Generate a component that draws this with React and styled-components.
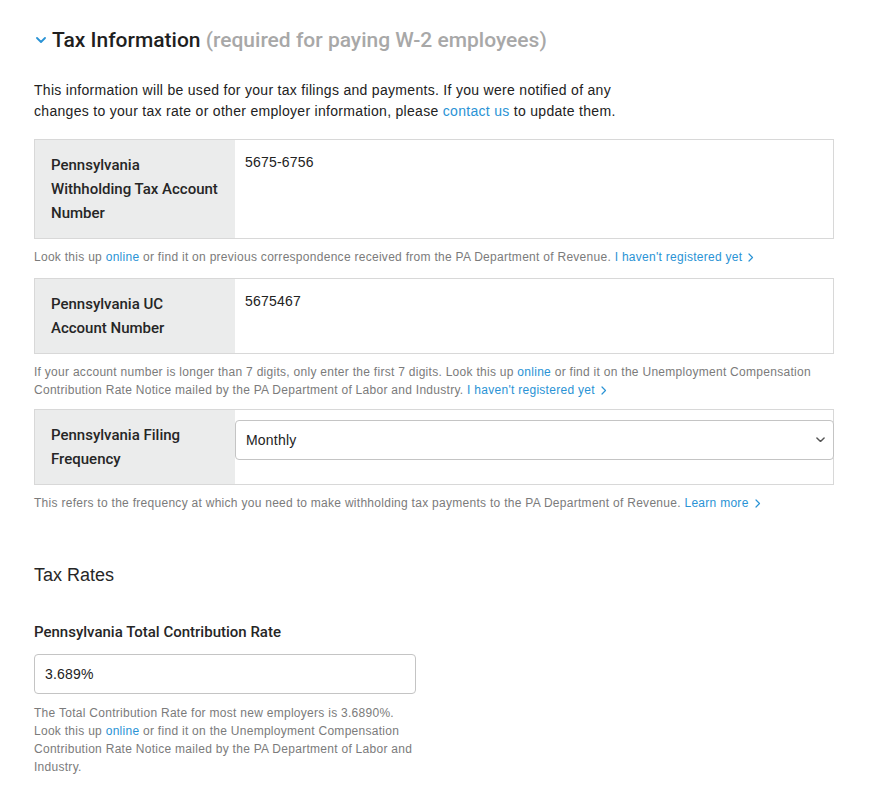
import React, { useState } from 'react'
import styled, { createGlobalStyle } from 'styled-components'

const GlobalStyle = createGlobalStyle`
  body {
    margin: 0;
    background: #fff;
    font-family: "Liberation Sans", Arial, sans-serif;
    color: #1f1f1f;
  }
`

const Page = styled.div`
  width: 800px;
  padding: 26px 0 30px 34px;
`

const Header = styled.div`
  display: flex;
  align-items: center;
  gap: 6px;
  margin-left: 2px;
`

const Title = styled.h2`
  margin: 0;
  font-family: Roboto, "Liberation Sans", sans-serif;
  font-size: 21px;
  line-height: 28px;
  font-weight: 500;
  color: #1f1f1f;
`

const Muted = styled.span`
  color: #a8a8a8;
`

const Intro = styled.p`
  margin: 26px 0 0;
  font-size: 14px;
  line-height: 21px;
  letter-spacing: 0.3px;
  width: 600px;
  color: #222;
`

const Link = styled.a`
  color: #2a93d5;
  text-decoration: none;
  cursor: pointer;
`

const FieldRow = styled.div`
  display: grid;
  grid-template-columns: 200px 1fr;
  border: 1px solid #d8d8d8;
  margin-top: ${(p) => p.$top || 12}px;
`

const Label = styled.div`
  background: #ebecec;
  padding: 13px 16px;
  font-family: Roboto, "Liberation Sans", sans-serif;
  font-size: 15px;
  line-height: 24px;
  font-weight: 500;
  color: #262626;
`

const ValueCell = styled.div`
  padding: 12px 10px;
  font-size: 14px;
  line-height: 20px;
  letter-spacing: 0.2px;
  color: #222;
`

const SelectCell = styled.div`
  padding-top: 10px;
`

const SelectBox = styled.div`
  position: relative;
  height: 40px;
  margin-right: -1px;
`

const Select = styled.select`
  appearance: none;
  width: 100%;
  height: 40px;
  border: 1px solid #c4c4c4;
  border-radius: 4px;
  background: #fff;
  padding: 0 10px;
  font-family: inherit;
  font-size: 14px;
  letter-spacing: 0.2px;
  color: #222;
  outline: none;
`

const SelectArrow = styled.span`
  position: absolute;
  right: 9px;
  top: 17px;
  pointer-events: none;
  display: flex;
`

const Help = styled.p`
  margin: ${(p) => p.$top || 9}px 0 0;
  font-size: 12px;
  line-height: 18px;
  letter-spacing: 0.28px;
  color: #7b7b7b;
  max-width: ${(p) => p.$width || 'none'};
`

const SectionTitle = styled.h3`
  margin: 51px 0 0;
  font-size: 18px;
  line-height: 24px;
  font-weight: 400;
  color: #262626;
`

const FieldLabel = styled.div`
  margin-top: 35px;
  font-family: Roboto, "Liberation Sans", sans-serif;
  font-size: 15px;
  line-height: 20px;
  font-weight: 500;
  color: #262626;
`

const Input = styled.input`
  box-sizing: border-box;
  display: block;
  margin-top: 12px;
  width: 382px;
  height: 40px;
  border: 1px solid #c4c4c4;
  border-radius: 4px;
  padding: 0 10px;
  font-family: inherit;
  font-size: 14px;
  letter-spacing: 0.2px;
  color: #222;
  outline: none;
`

const ChevronDown = ({ color = '#2a93d5', width = 10, stroke = 1.8 }) => (
  <svg width={width} height={width * 0.6} viewBox="0 0 10 6" fill="none">
    <path d="M1 1l4 4 4-4" stroke={color} strokeWidth={stroke} strokeLinecap="round" strokeLinejoin="round" />
  </svg>
)

const ChevronRight = () => (
  <svg width="6" height="9" viewBox="0 0 6 9" fill="none" style={{ marginLeft: 6, verticalAlign: '-0.5px' }}>
    <path d="M1 1l3.5 3.5L1 8" stroke="#2a93d5" strokeWidth="1.2" strokeLinecap="round" strokeLinejoin="round" />
  </svg>
)

const App = () => {
  const [frequency, setFrequency] = useState('monthly')
  const [rate, setRate] = useState('3.689%')

  return (
    <Page>
      <GlobalStyle />
      <Header>
        <ChevronDown />
        <Title>
          Tax Information <Muted>(required for paying W-2 employees)</Muted>
        </Title>
      </Header>

      <Intro>
        This information will be used for your tax filings and payments. If you were notified of any
        changes to your tax rate or other employer information, please <Link>contact us</Link> to update them.
      </Intro>

      <FieldRow $top={17}>
        <Label>Pennsylvania Withholding Tax Account Number</Label>
        <ValueCell>5675-6756</ValueCell>
      </FieldRow>
      <Help>
        Look this up <Link>online</Link> or find it on previous correspondence received from the PA Department of Revenue.{' '}
        <Link>I haven't registered yet<ChevronRight /></Link>
      </Help>

      <FieldRow>
        <Label>Pennsylvania UC Account Number</Label>
        <ValueCell>5675467</ValueCell>
      </FieldRow>
      <Help>
        If your account number is longer than 7 digits, only enter the first 7 digits. Look this up <Link>online</Link> or
        find it on the Unemployment Compensation Contribution Rate Notice mailed by the PA Department of Labor and Industry.{' '}
        <Link>I haven't registered yet<ChevronRight /></Link>
      </Help>

      <FieldRow $top={10}>
        <Label>Pennsylvania Filing Frequency</Label>
        <SelectCell>
          <SelectBox>
            <Select value={frequency} onChange={(e) => setFrequency(e.target.value)}>
              <option value="monthly">Monthly</option>
              <option value="quarterly">Quarterly</option>
              <option value="semi-monthly">Semi-Monthly</option>
            </Select>
            <SelectArrow>
              <ChevronDown color="#555" width={9} stroke={1.6} />
            </SelectArrow>
          </SelectBox>
        </SelectCell>
      </FieldRow>
      <Help>
        This refers to the frequency at which you need to make withholding tax payments to the PA Department of Revenue.{' '}
        <Link>Learn more<ChevronRight /></Link>
      </Help>

      <SectionTitle>Tax Rates</SectionTitle>

      <FieldLabel>Pennsylvania Total Contribution Rate</FieldLabel>
      <Input value={rate} onChange={(e) => setRate(e.target.value)} />
      <Help $top={10} $width="382px">
        The Total Contribution Rate for most new employers is 3.6890%. Look this up <Link>online</Link> or find it on
        the Unemployment Compensation Contribution Rate Notice mailed by the PA Department of Labor and Industry.
      </Help>
    </Page>
  )
}

export default App
